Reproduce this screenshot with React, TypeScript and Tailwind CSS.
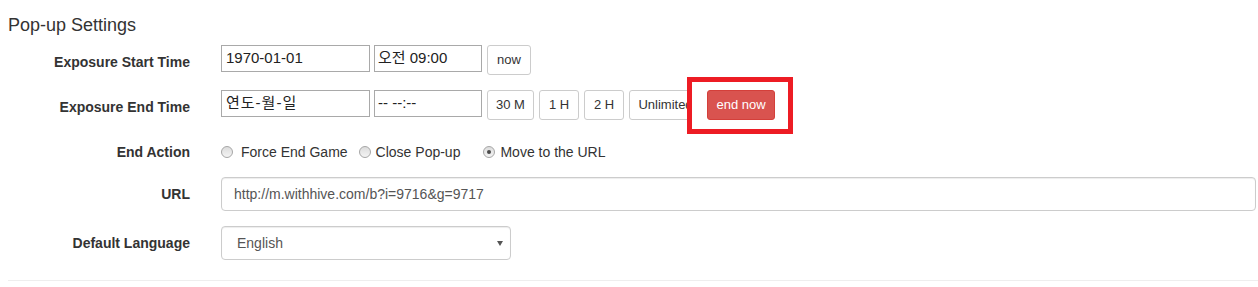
import React from "react";

function Radio({ checked }: { checked?: boolean }) {
  return (
    <span className="relative inline-flex h-[12px] w-[12px] shrink-0 items-center justify-center rounded-full border border-[#a6a6a6] bg-gradient-to-b from-[#dcdcdc] to-[#f4f4f4]">
      {checked && <span className="h-[4px] w-[4px] rounded-full bg-[#4a4a4a]" />}
    </span>
  );
}

function Btn({ w, children }: { w: string; children: React.ReactNode }) {
  return (
    <div
      className={`flex h-[30px] shrink-0 items-center justify-center overflow-hidden whitespace-nowrap rounded-[3px] border border-[#ccc] bg-white text-[13px] text-[#333] ${w}`}
    >
      {children}
    </div>
  );
}

export default function App() {
  return (
    <div className="h-[287px] w-[1258px] overflow-hidden bg-white pl-2 font-['Liberation_Sans','Noto_Sans_CJK_KR',sans-serif] text-[#333]">
      <div className="pr-[2px]">
        <div className="h-[20px] pt-0 mt-[15px] text-[18px] leading-[20px]">Pop-up Settings</div>

        {/* Row 1 */}
        <div className="mt-[10px] flex">
          <div className="w-[182px] shrink-0 pt-[7px] text-right text-[14px] font-bold leading-[20px]">Exposure Start Time</div>
          <div className="ml-[31px] flex items-start">
            <div className="flex h-[27px] w-[149px] items-center border border-[#a9a9a9] px-[4px] text-[15px] text-[#222]">1970-01-01</div>
            <div className="ml-[4px] flex h-[27px] w-[108px] items-center border border-[#a9a9a9] px-[3px] text-[15px] text-[#222]">오전 09:00</div>
            <div className="ml-[5px]">
              <Btn w="w-[44px]">now</Btn>
            </div>
          </div>
        </div>

        {/* Row 2 */}
        <div className="mt-[15px] flex">
          <div className="w-[182px] shrink-0 pt-[7px] text-right text-[14px] font-bold leading-[20px]">Exposure End Time</div>
          <div className="ml-[31px] flex items-start">
            <div className="flex h-[27px] w-[149px] items-center border border-[#a9a9a9] px-[4px] text-[15px] tracking-[1px] text-[#222]">연도-월-일</div>
            <div className="ml-[4px] flex h-[27px] w-[108px] items-center border border-[#a9a9a9] px-[3px] text-[15px] text-[#222]">-- --:--</div>
            <div className="ml-[5px] flex gap-[5px]">
              <Btn w="w-[47px]">30 M</Btn>
              <Btn w="w-[40px]">1 H</Btn>
              <Btn w="w-[40px]">2 H</Btn>
              <Btn w="w-[73px]">Unlimited</Btn>
              <div className="relative">
                <div className="absolute left-[-20px] top-[-13px] h-[57px] w-[106px] border-[5px] border-[#ed1c24] bg-white" />
                <div className="relative z-10 flex h-[30px] w-[68px] items-center justify-center rounded-[3px] border border-[#d43f3a] bg-[#d9534f] text-[13px] text-white">
                  end now
                </div>
              </div>
            </div>
          </div>
        </div>

        {/* Row 3 */}
        <div className="mt-[15px] flex">
          <div className="w-[182px] shrink-0 pt-[7px] text-right text-[14px] font-bold leading-[20px]">End Action</div>
          <div className="ml-[31px] flex items-center pt-[7px] text-[14px] leading-[20px] text-[#333]">
            <div className="flex items-center">
              <Radio />
              <span className="ml-[8px]">Force End Game</span>
            </div>
            <div className="ml-[11px] flex items-center">
              <Radio />
              <span className="ml-[5px]">Close Pop-up</span>
            </div>
            <div className="ml-[23px] flex items-center">
              <Radio checked />
              <span className="ml-[5px]">Move to the URL</span>
            </div>
          </div>
        </div>

        {/* Row 4 */}
        <div className="mt-[15px] flex">
          <div className="w-[182px] shrink-0 pt-[7px] text-right text-[14px] font-bold leading-[20px]">URL</div>
          <div className="ml-[31px] flex h-[34px] flex-1 items-center rounded-[4px] border border-[#ccc] px-[12px] text-[14px] text-[#555] shadow-[inset_0_1px_1px_rgba(0,0,0,0.075)]">
            http://m.withhive.com/b?i=9716&amp;g=9717
          </div>
        </div>

        {/* Row 5 */}
        <div className="mt-[15px] flex">
          <div className="w-[182px] shrink-0 pt-[7px] text-right text-[14px] font-bold leading-[20px]">Default Language</div>
          <div className="ml-[31px] flex h-[34px] w-[290px] items-center justify-between rounded-[4px] border border-[#ccc] pl-[15px] pr-[7px] text-[14px] text-[#555] shadow-[inset_0_1px_1px_rgba(0,0,0,0.075)]">
            <span>English</span>
            <svg width="6" height="5" viewBox="0 0 6 5">
              <path d="M0 0 L6 0 L3 5 Z" fill="#555" />
            </svg>
          </div>
        </div>
      </div>

      <div className="mt-[20px] h-px bg-[#eee]" />
    </div>
  );
}
